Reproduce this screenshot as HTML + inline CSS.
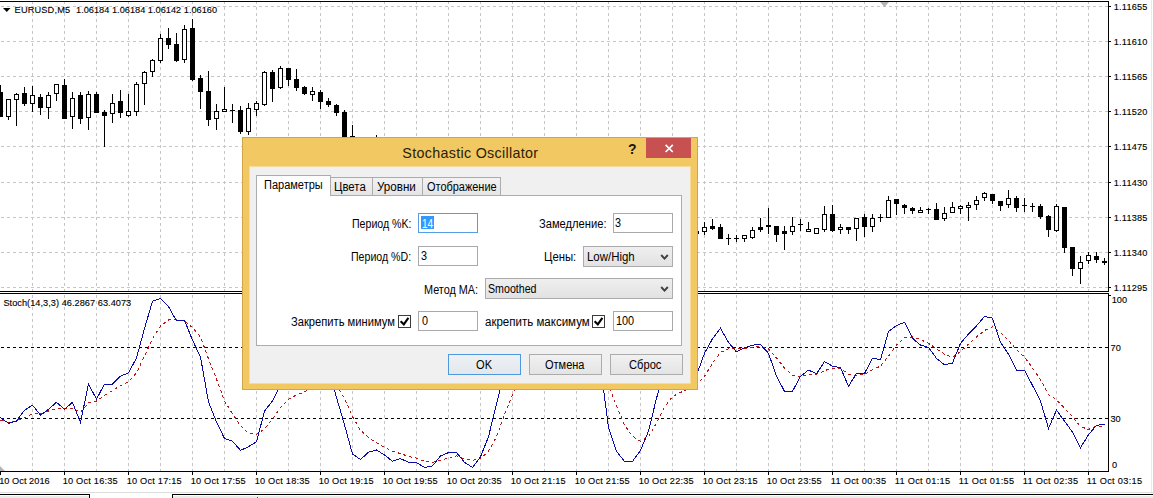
<!DOCTYPE html>
<html><head><meta charset="utf-8"><title>Stochastic Oscillator</title>
<style>
html,body{margin:0;padding:0;background:#fff;}
body{width:1153px;height:498px;position:relative;overflow:hidden;font-family:"Liberation Sans",sans-serif;color:#000;}
svg.ch{position:absolute;left:0;top:0;}
svg.ic{position:absolute;z-index:3;}
.t{position:absolute;white-space:pre;}
.b{position:absolute;box-sizing:border-box;}
#dlg{left:242px;top:137px;width:456px;height:253px;background:#f1c862;border:1px solid #d3a449;z-index:2;}
#cli{left:250px;top:167px;width:440px;height:216px;background:#f0f0f0;z-index:2;box-shadow:0 0 0 1px rgba(255,255,255,0.35);}
.tab{border:1px solid #acacac;border-bottom:none;background:linear-gradient(#f2f2f2,#e5e5e5);z-index:2;}
.in{border:1px solid #a8a9ab;background:#fff;z-index:2;}
.cb{border:1px solid #acacac;background:linear-gradient(#efefef,#e2e2e2);z-index:2;}
.btn{border:1px solid #acacac;background:linear-gradient(#f1f1f1,#e4e4e4);z-index:2;top:354px;width:73px;height:21px;}
.chk{border:1px solid #3c3c3c;background:#fff;width:13px;height:13px;z-index:2;}
</style></head><body>
<svg class="ch" width="1153" height="498" viewBox="0 0 1153 498" shape-rendering="crispEdges">
<line x1="1" y1="6.5" x2="1108" y2="6.5" stroke="#c6c6c6" stroke-dasharray="3 3"/>
<line x1="1" y1="41.5" x2="1108" y2="41.5" stroke="#c6c6c6" stroke-dasharray="3 3"/>
<line x1="1" y1="76.5" x2="1108" y2="76.5" stroke="#c6c6c6" stroke-dasharray="3 3"/>
<line x1="1" y1="111.5" x2="1108" y2="111.5" stroke="#c6c6c6" stroke-dasharray="3 3"/>
<line x1="1" y1="146.5" x2="1108" y2="146.5" stroke="#c6c6c6" stroke-dasharray="3 3"/>
<line x1="1" y1="182.5" x2="1108" y2="182.5" stroke="#c6c6c6" stroke-dasharray="3 3"/>
<line x1="1" y1="217.5" x2="1108" y2="217.5" stroke="#c6c6c6" stroke-dasharray="3 3"/>
<line x1="1" y1="252.5" x2="1108" y2="252.5" stroke="#c6c6c6" stroke-dasharray="3 3"/>
<line x1="1" y1="287.5" x2="1108" y2="287.5" stroke="#c6c6c6" stroke-dasharray="3 3"/>
<line x1="32.5" y1="1" x2="32.5" y2="291" stroke="#c6c6c6" stroke-dasharray="3 3"/>
<line x1="32.5" y1="295" x2="32.5" y2="471" stroke="#c6c6c6" stroke-dasharray="3 3"/>
<line x1="64.5" y1="1" x2="64.5" y2="291" stroke="#c6c6c6" stroke-dasharray="3 3"/>
<line x1="64.5" y1="295" x2="64.5" y2="471" stroke="#c6c6c6" stroke-dasharray="3 3"/>
<line x1="96.5" y1="1" x2="96.5" y2="291" stroke="#c6c6c6" stroke-dasharray="3 3"/>
<line x1="96.5" y1="295" x2="96.5" y2="471" stroke="#c6c6c6" stroke-dasharray="3 3"/>
<line x1="128.5" y1="1" x2="128.5" y2="291" stroke="#c6c6c6" stroke-dasharray="3 3"/>
<line x1="128.5" y1="295" x2="128.5" y2="471" stroke="#c6c6c6" stroke-dasharray="3 3"/>
<line x1="160.5" y1="1" x2="160.5" y2="291" stroke="#c6c6c6" stroke-dasharray="3 3"/>
<line x1="160.5" y1="295" x2="160.5" y2="471" stroke="#c6c6c6" stroke-dasharray="3 3"/>
<line x1="192.5" y1="1" x2="192.5" y2="291" stroke="#c6c6c6" stroke-dasharray="3 3"/>
<line x1="192.5" y1="295" x2="192.5" y2="471" stroke="#c6c6c6" stroke-dasharray="3 3"/>
<line x1="224.5" y1="1" x2="224.5" y2="291" stroke="#c6c6c6" stroke-dasharray="3 3"/>
<line x1="224.5" y1="295" x2="224.5" y2="471" stroke="#c6c6c6" stroke-dasharray="3 3"/>
<line x1="256.5" y1="1" x2="256.5" y2="291" stroke="#c6c6c6" stroke-dasharray="3 3"/>
<line x1="256.5" y1="295" x2="256.5" y2="471" stroke="#c6c6c6" stroke-dasharray="3 3"/>
<line x1="288.5" y1="1" x2="288.5" y2="291" stroke="#c6c6c6" stroke-dasharray="3 3"/>
<line x1="288.5" y1="295" x2="288.5" y2="471" stroke="#c6c6c6" stroke-dasharray="3 3"/>
<line x1="320.5" y1="1" x2="320.5" y2="291" stroke="#c6c6c6" stroke-dasharray="3 3"/>
<line x1="320.5" y1="295" x2="320.5" y2="471" stroke="#c6c6c6" stroke-dasharray="3 3"/>
<line x1="352.5" y1="1" x2="352.5" y2="291" stroke="#c6c6c6" stroke-dasharray="3 3"/>
<line x1="352.5" y1="295" x2="352.5" y2="471" stroke="#c6c6c6" stroke-dasharray="3 3"/>
<line x1="384.5" y1="1" x2="384.5" y2="291" stroke="#c6c6c6" stroke-dasharray="3 3"/>
<line x1="384.5" y1="295" x2="384.5" y2="471" stroke="#c6c6c6" stroke-dasharray="3 3"/>
<line x1="416.5" y1="1" x2="416.5" y2="291" stroke="#c6c6c6" stroke-dasharray="3 3"/>
<line x1="416.5" y1="295" x2="416.5" y2="471" stroke="#c6c6c6" stroke-dasharray="3 3"/>
<line x1="448.5" y1="1" x2="448.5" y2="291" stroke="#c6c6c6" stroke-dasharray="3 3"/>
<line x1="448.5" y1="295" x2="448.5" y2="471" stroke="#c6c6c6" stroke-dasharray="3 3"/>
<line x1="480.5" y1="1" x2="480.5" y2="291" stroke="#c6c6c6" stroke-dasharray="3 3"/>
<line x1="480.5" y1="295" x2="480.5" y2="471" stroke="#c6c6c6" stroke-dasharray="3 3"/>
<line x1="512.5" y1="1" x2="512.5" y2="291" stroke="#c6c6c6" stroke-dasharray="3 3"/>
<line x1="512.5" y1="295" x2="512.5" y2="471" stroke="#c6c6c6" stroke-dasharray="3 3"/>
<line x1="544.5" y1="1" x2="544.5" y2="291" stroke="#c6c6c6" stroke-dasharray="3 3"/>
<line x1="544.5" y1="295" x2="544.5" y2="471" stroke="#c6c6c6" stroke-dasharray="3 3"/>
<line x1="576.5" y1="1" x2="576.5" y2="291" stroke="#c6c6c6" stroke-dasharray="3 3"/>
<line x1="576.5" y1="295" x2="576.5" y2="471" stroke="#c6c6c6" stroke-dasharray="3 3"/>
<line x1="608.5" y1="1" x2="608.5" y2="291" stroke="#c6c6c6" stroke-dasharray="3 3"/>
<line x1="608.5" y1="295" x2="608.5" y2="471" stroke="#c6c6c6" stroke-dasharray="3 3"/>
<line x1="640.5" y1="1" x2="640.5" y2="291" stroke="#c6c6c6" stroke-dasharray="3 3"/>
<line x1="640.5" y1="295" x2="640.5" y2="471" stroke="#c6c6c6" stroke-dasharray="3 3"/>
<line x1="672.5" y1="1" x2="672.5" y2="291" stroke="#c6c6c6" stroke-dasharray="3 3"/>
<line x1="672.5" y1="295" x2="672.5" y2="471" stroke="#c6c6c6" stroke-dasharray="3 3"/>
<line x1="704.5" y1="1" x2="704.5" y2="291" stroke="#c6c6c6" stroke-dasharray="3 3"/>
<line x1="704.5" y1="295" x2="704.5" y2="471" stroke="#c6c6c6" stroke-dasharray="3 3"/>
<line x1="736.5" y1="1" x2="736.5" y2="291" stroke="#c6c6c6" stroke-dasharray="3 3"/>
<line x1="736.5" y1="295" x2="736.5" y2="471" stroke="#c6c6c6" stroke-dasharray="3 3"/>
<line x1="768.5" y1="1" x2="768.5" y2="291" stroke="#c6c6c6" stroke-dasharray="3 3"/>
<line x1="768.5" y1="295" x2="768.5" y2="471" stroke="#c6c6c6" stroke-dasharray="3 3"/>
<line x1="800.5" y1="1" x2="800.5" y2="291" stroke="#c6c6c6" stroke-dasharray="3 3"/>
<line x1="800.5" y1="295" x2="800.5" y2="471" stroke="#c6c6c6" stroke-dasharray="3 3"/>
<line x1="832.5" y1="1" x2="832.5" y2="291" stroke="#c6c6c6" stroke-dasharray="3 3"/>
<line x1="832.5" y1="295" x2="832.5" y2="471" stroke="#c6c6c6" stroke-dasharray="3 3"/>
<line x1="864.5" y1="1" x2="864.5" y2="291" stroke="#c6c6c6" stroke-dasharray="3 3"/>
<line x1="864.5" y1="295" x2="864.5" y2="471" stroke="#c6c6c6" stroke-dasharray="3 3"/>
<line x1="896.5" y1="1" x2="896.5" y2="291" stroke="#c6c6c6" stroke-dasharray="3 3"/>
<line x1="896.5" y1="295" x2="896.5" y2="471" stroke="#c6c6c6" stroke-dasharray="3 3"/>
<line x1="928.5" y1="1" x2="928.5" y2="291" stroke="#c6c6c6" stroke-dasharray="3 3"/>
<line x1="928.5" y1="295" x2="928.5" y2="471" stroke="#c6c6c6" stroke-dasharray="3 3"/>
<line x1="960.5" y1="1" x2="960.5" y2="291" stroke="#c6c6c6" stroke-dasharray="3 3"/>
<line x1="960.5" y1="295" x2="960.5" y2="471" stroke="#c6c6c6" stroke-dasharray="3 3"/>
<line x1="992.5" y1="1" x2="992.5" y2="291" stroke="#c6c6c6" stroke-dasharray="3 3"/>
<line x1="992.5" y1="295" x2="992.5" y2="471" stroke="#c6c6c6" stroke-dasharray="3 3"/>
<line x1="1024.5" y1="1" x2="1024.5" y2="291" stroke="#c6c6c6" stroke-dasharray="3 3"/>
<line x1="1024.5" y1="295" x2="1024.5" y2="471" stroke="#c6c6c6" stroke-dasharray="3 3"/>
<line x1="1056.5" y1="1" x2="1056.5" y2="291" stroke="#c6c6c6" stroke-dasharray="3 3"/>
<line x1="1056.5" y1="295" x2="1056.5" y2="471" stroke="#c6c6c6" stroke-dasharray="3 3"/>
<line x1="1088.5" y1="1" x2="1088.5" y2="291" stroke="#c6c6c6" stroke-dasharray="3 3"/>
<line x1="1088.5" y1="295" x2="1088.5" y2="471" stroke="#c6c6c6" stroke-dasharray="3 3"/>
<rect x="0" y="85" width="1" height="32" fill="#000"/>
<rect x="-2" y="92" width="5" height="25" fill="#000"/>
<rect x="8" y="99" width="1" height="21" fill="#000"/>
<rect x="6" y="99" width="5" height="18" fill="#000"/>
<rect x="7" y="100" width="3" height="16" fill="#fff"/>
<rect x="16" y="93" width="1" height="33" fill="#000"/>
<rect x="14" y="94" width="5" height="6" fill="#000"/>
<rect x="15" y="95" width="3" height="4" fill="#fff"/>
<rect x="24" y="87" width="1" height="19" fill="#000"/>
<rect x="22" y="93" width="5" height="11" fill="#000"/>
<rect x="32" y="86" width="1" height="26" fill="#000"/>
<rect x="30" y="95" width="5" height="9" fill="#000"/>
<rect x="31" y="96" width="3" height="7" fill="#fff"/>
<rect x="40" y="94" width="1" height="21" fill="#000"/>
<rect x="38" y="97" width="5" height="11" fill="#000"/>
<rect x="48" y="92" width="1" height="27" fill="#000"/>
<rect x="46" y="95" width="5" height="13" fill="#000"/>
<rect x="47" y="96" width="3" height="11" fill="#fff"/>
<rect x="56" y="84" width="1" height="17" fill="#000"/>
<rect x="54" y="84" width="5" height="10" fill="#000"/>
<rect x="55" y="85" width="3" height="8" fill="#fff"/>
<rect x="64" y="79" width="1" height="40" fill="#000"/>
<rect x="62" y="85" width="5" height="34" fill="#000"/>
<rect x="72" y="92" width="1" height="37" fill="#000"/>
<rect x="70" y="98" width="5" height="19" fill="#000"/>
<rect x="71" y="99" width="3" height="17" fill="#fff"/>
<rect x="80" y="92" width="1" height="32" fill="#000"/>
<rect x="78" y="95" width="5" height="24" fill="#000"/>
<rect x="88" y="91" width="1" height="39" fill="#000"/>
<rect x="86" y="94" width="5" height="24" fill="#000"/>
<rect x="87" y="95" width="3" height="22" fill="#fff"/>
<rect x="96" y="92" width="1" height="21" fill="#000"/>
<rect x="94" y="94" width="5" height="19" fill="#000"/>
<rect x="104" y="110" width="1" height="37" fill="#000"/>
<rect x="102" y="112" width="5" height="4" fill="#000"/>
<rect x="112" y="94" width="1" height="29" fill="#000"/>
<rect x="110" y="103" width="5" height="11" fill="#000"/>
<rect x="111" y="104" width="3" height="9" fill="#fff"/>
<rect x="120" y="90" width="1" height="28" fill="#000"/>
<rect x="118" y="101" width="5" height="12" fill="#000"/>
<rect x="128" y="94" width="1" height="23" fill="#000"/>
<rect x="126" y="111" width="5" height="5" fill="#000"/>
<rect x="127" y="112" width="3" height="3" fill="#fff"/>
<rect x="136" y="82" width="1" height="34" fill="#000"/>
<rect x="134" y="84" width="5" height="28" fill="#000"/>
<rect x="135" y="85" width="3" height="26" fill="#fff"/>
<rect x="144" y="71" width="1" height="34" fill="#000"/>
<rect x="142" y="72" width="5" height="12" fill="#000"/>
<rect x="143" y="73" width="3" height="10" fill="#fff"/>
<rect x="152" y="59" width="1" height="18" fill="#000"/>
<rect x="150" y="60" width="5" height="12" fill="#000"/>
<rect x="151" y="61" width="3" height="10" fill="#fff"/>
<rect x="160" y="34" width="1" height="29" fill="#000"/>
<rect x="158" y="38" width="5" height="23" fill="#000"/>
<rect x="159" y="39" width="3" height="21" fill="#fff"/>
<rect x="168" y="28" width="1" height="21" fill="#000"/>
<rect x="166" y="38" width="5" height="7" fill="#000"/>
<rect x="176" y="33" width="1" height="29" fill="#000"/>
<rect x="174" y="44" width="5" height="17" fill="#000"/>
<rect x="184" y="25" width="1" height="38" fill="#000"/>
<rect x="182" y="29" width="5" height="31" fill="#000"/>
<rect x="183" y="30" width="3" height="29" fill="#fff"/>
<rect x="192" y="19" width="1" height="62" fill="#000"/>
<rect x="190" y="28" width="5" height="52" fill="#000"/>
<rect x="200" y="75" width="1" height="34" fill="#000"/>
<rect x="198" y="78" width="5" height="14" fill="#000"/>
<rect x="208" y="71" width="1" height="55" fill="#000"/>
<rect x="206" y="91" width="5" height="29" fill="#000"/>
<rect x="216" y="104" width="1" height="26" fill="#000"/>
<rect x="214" y="111" width="5" height="8" fill="#000"/>
<rect x="215" y="112" width="3" height="6" fill="#fff"/>
<rect x="224" y="87" width="1" height="25" fill="#000"/>
<rect x="222" y="109" width="5" height="3" fill="#000"/>
<rect x="223" y="110" width="3" height="1" fill="#fff"/>
<rect x="232" y="104" width="1" height="19" fill="#000"/>
<rect x="230" y="110" width="5" height="1" fill="#000"/>
<rect x="240" y="106" width="1" height="28" fill="#000"/>
<rect x="238" y="110" width="5" height="22" fill="#000"/>
<rect x="248" y="103" width="1" height="32" fill="#000"/>
<rect x="246" y="108" width="5" height="24" fill="#000"/>
<rect x="247" y="109" width="3" height="22" fill="#fff"/>
<rect x="256" y="101" width="1" height="15" fill="#000"/>
<rect x="254" y="103" width="5" height="7" fill="#000"/>
<rect x="255" y="104" width="3" height="5" fill="#fff"/>
<rect x="264" y="71" width="1" height="35" fill="#000"/>
<rect x="262" y="72" width="5" height="33" fill="#000"/>
<rect x="263" y="73" width="3" height="31" fill="#fff"/>
<rect x="272" y="70" width="1" height="32" fill="#000"/>
<rect x="270" y="72" width="5" height="17" fill="#000"/>
<rect x="280" y="66" width="1" height="23" fill="#000"/>
<rect x="278" y="68" width="5" height="20" fill="#000"/>
<rect x="279" y="69" width="3" height="18" fill="#fff"/>
<rect x="288" y="68" width="1" height="18" fill="#000"/>
<rect x="286" y="68" width="5" height="12" fill="#000"/>
<rect x="296" y="69" width="1" height="22" fill="#000"/>
<rect x="294" y="79" width="5" height="9" fill="#000"/>
<rect x="304" y="86" width="1" height="9" fill="#000"/>
<rect x="302" y="87" width="5" height="7" fill="#000"/>
<rect x="312" y="87" width="1" height="14" fill="#000"/>
<rect x="310" y="91" width="5" height="4" fill="#000"/>
<rect x="311" y="92" width="3" height="2" fill="#fff"/>
<rect x="320" y="90" width="1" height="19" fill="#000"/>
<rect x="318" y="92" width="5" height="10" fill="#000"/>
<rect x="328" y="98" width="1" height="9" fill="#000"/>
<rect x="326" y="101" width="5" height="4" fill="#000"/>
<rect x="336" y="104" width="1" height="12" fill="#000"/>
<rect x="334" y="105" width="5" height="8" fill="#000"/>
<rect x="344" y="110" width="1" height="30" fill="#000"/>
<rect x="342" y="112" width="5" height="28" fill="#000"/>
<rect x="352" y="125" width="1" height="15" fill="#000"/>
<rect x="350" y="136" width="5" height="4" fill="#000"/>
<rect x="351" y="137" width="3" height="2" fill="#fff"/>
<rect x="376" y="135" width="1" height="2" fill="#000"/>
<rect x="374" y="137" width="5" height="1" fill="#000"/>
<rect x="696" y="231" width="1" height="3" fill="#000"/>
<rect x="694" y="231" width="5" height="3" fill="#000"/>
<rect x="704" y="222" width="1" height="13" fill="#000"/>
<rect x="702" y="227" width="5" height="5" fill="#000"/>
<rect x="703" y="228" width="3" height="3" fill="#fff"/>
<rect x="712" y="219" width="1" height="11" fill="#000"/>
<rect x="710" y="226" width="5" height="3" fill="#000"/>
<rect x="720" y="224" width="1" height="15" fill="#000"/>
<rect x="718" y="227" width="5" height="12" fill="#000"/>
<rect x="728" y="234" width="1" height="11" fill="#000"/>
<rect x="726" y="238" width="5" height="1" fill="#000"/>
<rect x="736" y="235" width="1" height="7" fill="#000"/>
<rect x="734" y="238" width="5" height="1" fill="#000"/>
<rect x="744" y="235" width="1" height="7" fill="#000"/>
<rect x="742" y="235" width="5" height="4" fill="#000"/>
<rect x="743" y="236" width="3" height="2" fill="#fff"/>
<rect x="752" y="227" width="1" height="12" fill="#000"/>
<rect x="750" y="230" width="5" height="8" fill="#000"/>
<rect x="751" y="231" width="3" height="6" fill="#fff"/>
<rect x="760" y="218" width="1" height="14" fill="#000"/>
<rect x="758" y="227" width="5" height="3" fill="#000"/>
<rect x="768" y="208" width="1" height="26" fill="#000"/>
<rect x="766" y="225" width="5" height="2" fill="#000"/>
<rect x="776" y="226" width="1" height="16" fill="#000"/>
<rect x="774" y="226" width="5" height="9" fill="#000"/>
<rect x="784" y="226" width="1" height="24" fill="#000"/>
<rect x="782" y="231" width="5" height="3" fill="#000"/>
<rect x="792" y="217" width="1" height="18" fill="#000"/>
<rect x="790" y="226" width="5" height="6" fill="#000"/>
<rect x="791" y="227" width="3" height="4" fill="#fff"/>
<rect x="800" y="219" width="1" height="12" fill="#000"/>
<rect x="798" y="224" width="5" height="1" fill="#000"/>
<rect x="808" y="222" width="1" height="8" fill="#000"/>
<rect x="806" y="229" width="5" height="3" fill="#000"/>
<rect x="807" y="230" width="3" height="1" fill="#fff"/>
<rect x="816" y="228" width="1" height="6" fill="#000"/>
<rect x="814" y="228" width="5" height="6" fill="#000"/>
<rect x="815" y="229" width="3" height="4" fill="#fff"/>
<rect x="824" y="206" width="1" height="26" fill="#000"/>
<rect x="822" y="214" width="5" height="16" fill="#000"/>
<rect x="823" y="215" width="3" height="14" fill="#fff"/>
<rect x="832" y="205" width="1" height="27" fill="#000"/>
<rect x="830" y="214" width="5" height="17" fill="#000"/>
<rect x="840" y="224" width="1" height="10" fill="#000"/>
<rect x="838" y="227" width="5" height="3" fill="#000"/>
<rect x="839" y="228" width="3" height="1" fill="#fff"/>
<rect x="848" y="227" width="1" height="7" fill="#000"/>
<rect x="846" y="227" width="5" height="3" fill="#000"/>
<rect x="856" y="218" width="1" height="23" fill="#000"/>
<rect x="854" y="218" width="5" height="11" fill="#000"/>
<rect x="855" y="219" width="3" height="9" fill="#fff"/>
<rect x="864" y="214" width="1" height="23" fill="#000"/>
<rect x="862" y="217" width="5" height="10" fill="#000"/>
<rect x="872" y="214" width="1" height="18" fill="#000"/>
<rect x="870" y="218" width="5" height="9" fill="#000"/>
<rect x="871" y="219" width="3" height="7" fill="#fff"/>
<rect x="880" y="214" width="1" height="8" fill="#000"/>
<rect x="878" y="217" width="5" height="1" fill="#000"/>
<rect x="888" y="196" width="1" height="22" fill="#000"/>
<rect x="886" y="200" width="5" height="18" fill="#000"/>
<rect x="887" y="201" width="3" height="16" fill="#fff"/>
<rect x="896" y="199" width="1" height="16" fill="#000"/>
<rect x="894" y="199" width="5" height="5" fill="#000"/>
<rect x="904" y="204" width="1" height="10" fill="#000"/>
<rect x="902" y="205" width="5" height="3" fill="#000"/>
<rect x="912" y="207" width="1" height="7" fill="#000"/>
<rect x="910" y="208" width="5" height="3" fill="#000"/>
<rect x="920" y="207" width="1" height="4" fill="#000"/>
<rect x="918" y="210" width="5" height="3" fill="#000"/>
<rect x="919" y="211" width="3" height="1" fill="#fff"/>
<rect x="928" y="208" width="1" height="6" fill="#000"/>
<rect x="926" y="209" width="5" height="1" fill="#000"/>
<rect x="936" y="203" width="1" height="17" fill="#000"/>
<rect x="934" y="209" width="5" height="11" fill="#000"/>
<rect x="944" y="207" width="1" height="14" fill="#000"/>
<rect x="942" y="213" width="5" height="6" fill="#000"/>
<rect x="943" y="214" width="3" height="4" fill="#fff"/>
<rect x="952" y="202" width="1" height="11" fill="#000"/>
<rect x="950" y="207" width="5" height="6" fill="#000"/>
<rect x="951" y="208" width="3" height="4" fill="#fff"/>
<rect x="960" y="205" width="1" height="9" fill="#000"/>
<rect x="958" y="206" width="5" height="3" fill="#000"/>
<rect x="959" y="207" width="3" height="1" fill="#fff"/>
<rect x="968" y="202" width="1" height="19" fill="#000"/>
<rect x="966" y="205" width="5" height="3" fill="#000"/>
<rect x="967" y="206" width="3" height="1" fill="#fff"/>
<rect x="976" y="196" width="1" height="14" fill="#000"/>
<rect x="974" y="200" width="5" height="5" fill="#000"/>
<rect x="975" y="201" width="3" height="3" fill="#fff"/>
<rect x="984" y="192" width="1" height="9" fill="#000"/>
<rect x="982" y="193" width="5" height="5" fill="#000"/>
<rect x="983" y="194" width="3" height="3" fill="#fff"/>
<rect x="992" y="194" width="1" height="10" fill="#000"/>
<rect x="990" y="194" width="5" height="7" fill="#000"/>
<rect x="1000" y="201" width="1" height="10" fill="#000"/>
<rect x="998" y="201" width="5" height="5" fill="#000"/>
<rect x="1008" y="190" width="1" height="18" fill="#000"/>
<rect x="1006" y="198" width="5" height="7" fill="#000"/>
<rect x="1007" y="199" width="3" height="5" fill="#fff"/>
<rect x="1016" y="196" width="1" height="16" fill="#000"/>
<rect x="1014" y="198" width="5" height="10" fill="#000"/>
<rect x="1024" y="198" width="1" height="14" fill="#000"/>
<rect x="1022" y="205" width="5" height="1" fill="#000"/>
<rect x="1032" y="203" width="1" height="9" fill="#000"/>
<rect x="1030" y="206" width="5" height="1" fill="#000"/>
<rect x="1040" y="204" width="1" height="15" fill="#000"/>
<rect x="1038" y="206" width="5" height="11" fill="#000"/>
<rect x="1048" y="215" width="1" height="22" fill="#000"/>
<rect x="1046" y="216" width="5" height="14" fill="#000"/>
<rect x="1056" y="204" width="1" height="28" fill="#000"/>
<rect x="1054" y="206" width="5" height="25" fill="#000"/>
<rect x="1055" y="207" width="3" height="23" fill="#fff"/>
<rect x="1064" y="207" width="1" height="46" fill="#000"/>
<rect x="1062" y="207" width="5" height="41" fill="#000"/>
<rect x="1072" y="247" width="1" height="29" fill="#000"/>
<rect x="1070" y="247" width="5" height="22" fill="#000"/>
<rect x="1080" y="256" width="1" height="28" fill="#000"/>
<rect x="1078" y="262" width="5" height="7" fill="#000"/>
<rect x="1079" y="263" width="3" height="5" fill="#fff"/>
<rect x="1088" y="252" width="1" height="12" fill="#000"/>
<rect x="1086" y="255" width="5" height="6" fill="#000"/>
<rect x="1087" y="256" width="3" height="4" fill="#fff"/>
<rect x="1096" y="252" width="1" height="11" fill="#000"/>
<rect x="1094" y="256" width="5" height="4" fill="#000"/>
<rect x="1104" y="258" width="1" height="7" fill="#000"/>
<rect x="1102" y="261" width="5" height="2" fill="#000"/>
<line x1="1" y1="347.5" x2="1108" y2="347.5" stroke="#000" stroke-dasharray="3 3"/>
<line x1="1" y1="418.5" x2="1108" y2="418.5" stroke="#000" stroke-dasharray="3 3"/>
<polyline points="0.5,420.2 8.5,422.4 16.5,420.6 24.5,417.8 32.5,413.8 40.5,413.8 48.5,411.0 56.5,408.9 64.5,408.3 72.5,408.3 80.5,412.5 88.5,402.9 96.5,401.0 104.5,395.5 112.5,390.6 120.5,385.5 128.5,382.0 136.5,372.9 144.5,356.0 152.5,338.7 160.5,325.9 168.5,320.0 176.5,319.5 184.5,320.8 192.5,327.7 200.5,336.9 208.5,358.8 216.5,379.0 224.5,401.0 232.5,413.8 240.5,425.7 248.5,433.4 256.5,434.5 264.5,429.0 272.5,419.3 280.5,407.4 288.5,399.2 296.5,395.0 304.5,391.9 312.5,388.0 320.5,380.0 328.5,375.0 336.5,385.0 344.5,398.3 352.5,416.6 360.5,430.3 368.5,437.6 376.5,442.7 384.5,447.3 392.5,451.2 400.5,453.6 408.5,456.4 416.5,458.2 424.5,461.4 432.5,462.3 440.5,460.4 448.5,457.7 456.5,455.9 464.5,459.0 472.5,460.4 480.5,458.6 488.5,451.3 496.5,436.7 504.5,414.7 512.5,394.6 520.5,375.0" fill="none" stroke="#b81414" stroke-dasharray="3 3"/>
<polyline points="600.5,360.0 608.5,385.0 616.5,405.6 624.5,424.8 632.5,436.3 640.5,441.2 648.5,436.7 656.5,423.0 664.5,407.4 672.5,396.5 680.5,392.4 688.5,389.0 696.5,384.6 704.5,376.2 712.5,363.4 720.5,352.4 728.5,348.8 736.5,348.8 744.5,348.4 752.5,347.5 760.5,346.4 768.5,348.8 776.5,357.9 784.5,368.0 792.5,375.3 800.5,376.7 808.5,374.4 816.5,374.4 824.5,370.7 832.5,368.0 840.5,368.0 848.5,374.4 856.5,375.3 864.5,374.4 872.5,369.8 880.5,366.1 888.5,356.1 896.5,345.1 904.5,337.8 912.5,336.9 920.5,339.6 928.5,343.3 936.5,348.8 944.5,354.2 952.5,357.4 960.5,351.5 968.5,344.2 976.5,336.9 984.5,330.5 992.5,326.8 1000.5,332.3 1008.5,340.5 1016.5,349.7 1024.5,357.0 1032.5,368.0 1040.5,379.5 1048.5,394.6 1056.5,399.7 1064.5,408.3 1072.5,416.6 1080.5,426.6 1088.5,429.4 1096.5,426.1 1104.5,426.6" fill="none" stroke="#b81414" stroke-dasharray="3 3"/>
<polyline points="0.5,417.5 8.5,423.3 16.5,421.1 24.5,410.2 32.5,405.2 40.5,415.1 48.5,409.3 56.5,402.3 64.5,409.3 72.5,402.3 80.5,422.4 88.5,384.0 96.5,399.2 104.5,384.0 112.5,384.0 120.5,376.2 128.5,372.9 136.5,357.9 144.5,328.6 152.5,301.2 160.5,298.5 168.5,306.7 176.5,320.8 184.5,320.4 192.5,340.2 200.5,357.0 208.5,402.0 216.5,422.0 224.5,438.5 232.5,441.2 240.5,450.4 248.5,446.7 256.5,441.8 264.5,411.1 272.5,401.0 280.5,385.5 288.5,370.0 296.5,350.0 304.5,340.0 312.5,345.0 320.5,350.0 328.5,370.0 336.5,397.4 344.5,424.8 352.5,454.0 360.5,459.5 368.5,452.2 376.5,450.0 384.5,455.0 392.5,461.2 400.5,458.6 408.5,462.3 416.5,462.6 424.5,467.4 432.5,465.9 440.5,455.9 448.5,452.6 456.5,452.6 464.5,462.3 472.5,467.4 480.5,456.8 488.5,436.7 496.5,403.8 504.5,372.0" fill="none" stroke="#0a0aa8"/>
<polyline points="600.5,365.7 608.5,427.5 616.5,451.3 624.5,461.4 632.5,461.4 640.5,450.4 648.5,431.2 656.5,398.3 664.5,370.0 672.5,360.0 680.5,365.0 688.5,380.0 696.5,375.3 704.5,353.3 712.5,338.7 720.5,328.3 728.5,342.4 736.5,351.9 744.5,347.8 752.5,345.1 760.5,344.6 768.5,353.3 776.5,376.2 784.5,391.3 792.5,391.3 800.5,376.2 808.5,370.1 816.5,373.8 824.5,361.6 832.5,366.1 840.5,367.6 848.5,386.2 856.5,373.4 864.5,373.4 872.5,358.4 880.5,359.5 888.5,331.4 896.5,325.5 904.5,322.3 912.5,338.3 920.5,345.1 928.5,347.3 936.5,358.4 944.5,364.8 952.5,363.0 960.5,343.3 968.5,334.1 976.5,325.9 984.5,316.4 992.5,318.2 1000.5,342.4 1008.5,354.2 1016.5,370.1 1024.5,370.1 1032.5,385.4 1040.5,401.0 1048.5,428.4 1056.5,410.2 1064.5,421.1 1072.5,432.1 1080.5,447.6 1088.5,434.8 1096.5,425.3 1104.5,424.2" fill="none" stroke="#0a0aa8"/>
<rect x="0" y="1" width="1109" height="1" fill="#000"/>
<rect x="0" y="291" width="1109" height="1" fill="#000"/>
<rect x="0" y="293" width="1109" height="1" fill="#000"/>
<rect x="0" y="471" width="1109" height="1" fill="#000"/>
<rect x="1108" y="1" width="1" height="291" fill="#000"/>
<rect x="1108" y="293" width="1" height="179" fill="#000"/>
<rect x="1109" y="6" width="2" height="1" fill="#000"/>
<rect x="1109" y="41" width="2" height="1" fill="#000"/>
<rect x="1109" y="76" width="2" height="1" fill="#000"/>
<rect x="1109" y="111" width="2" height="1" fill="#000"/>
<rect x="1109" y="146" width="2" height="1" fill="#000"/>
<rect x="1109" y="182" width="2" height="1" fill="#000"/>
<rect x="1109" y="217" width="2" height="1" fill="#000"/>
<rect x="1109" y="252" width="2" height="1" fill="#000"/>
<rect x="1109" y="287" width="2" height="1" fill="#000"/>
<rect x="1109" y="295" width="2" height="1" fill="#000"/>
<rect x="0" y="472" width="1" height="3" fill="#000"/>
<rect x="64" y="472" width="1" height="3" fill="#000"/>
<rect x="128" y="472" width="1" height="3" fill="#000"/>
<rect x="192" y="472" width="1" height="3" fill="#000"/>
<rect x="256" y="472" width="1" height="3" fill="#000"/>
<rect x="320" y="472" width="1" height="3" fill="#000"/>
<rect x="384" y="472" width="1" height="3" fill="#000"/>
<rect x="448" y="472" width="1" height="3" fill="#000"/>
<rect x="512" y="472" width="1" height="3" fill="#000"/>
<rect x="576" y="472" width="1" height="3" fill="#000"/>
<rect x="640" y="472" width="1" height="3" fill="#000"/>
<rect x="704" y="472" width="1" height="3" fill="#000"/>
<rect x="768" y="472" width="1" height="3" fill="#000"/>
<rect x="832" y="472" width="1" height="3" fill="#000"/>
<rect x="896" y="472" width="1" height="3" fill="#000"/>
<rect x="960" y="472" width="1" height="3" fill="#000"/>
<rect x="1024" y="472" width="1" height="3" fill="#000"/>
<rect x="1088" y="472" width="1" height="3" fill="#000"/>
<polygon points="880,2 889,2 884.5,7" fill="#b4b4b4" shape-rendering="auto"/>
<polygon points="0,466 0,471 5,471" fill="#b4b4b4" shape-rendering="auto"/>
<polygon points="3,8 10.5,8 6.75,12" fill="#000" shape-rendering="auto"/>
</svg>
<div class="b" style="left:1151px;top:0;width:1px;height:492px;background:#e6eaf0;"></div>
<div class="b" style="left:0;top:492px;width:1153px;height:1px;background:#dcdcdc;"></div>
<div class="b" style="left:0;top:494px;width:90px;height:4px;border-top:1px solid #000;border-right:1px solid #000;background:#ececec;box-shadow:inset 0 1px 0 #fff;"></div>
<div class="b" style="left:172px;top:494px;width:981px;height:4px;border-top:1px solid #000;border-left:1px solid #000;background:#ececec;box-shadow:inset 0 1px 0 #fff;"></div>

<div class="b" style="left:257px;top:497px;width:1px;height:1px;background:#555;"></div>
<div class="b" id="dlg"></div>
<div class="b" style="left:646px;top:138px;width:45px;height:20px;background:#c75050;z-index:2;"></div>
<svg class="ic" style="left:646px;top:138px" width="45" height="20" viewBox="0 0 45 20"><path d="M19.6 6.8 L26.8 14 M26.8 6.8 L19.6 14" stroke="#fff" stroke-width="1.7" fill="none"/></svg>
<div class="b" id="cli"></div>
<div class="b" style="left:256px;top:195px;width:426px;height:151px;border:1px solid #acacac;background:#fff;z-index:2;"></div>
<div class="b tab" style="left:330px;top:177px;width:43px;height:18px;"></div>
<div class="b tab" style="left:372px;top:177px;width:51px;height:18px;"></div>
<div class="b tab" style="left:422px;top:177px;width:79px;height:18px;"></div>
<div class="b tab" style="left:256px;top:175px;width:75px;height:21px;background:#fff;"></div>

<div class="b in" style="left:418px;top:213px;width:60px;height:20px;border-color:#569de5;"></div>
<div class="b" style="left:421px;top:216px;width:13px;height:13px;background:#3399ff;z-index:2;"></div>
<div class="b in" style="left:418px;top:246px;width:60px;height:20px;"></div>
<div class="b in" style="left:613px;top:213px;width:60px;height:20px;"></div>
<div class="b cb" style="left:583px;top:246px;width:90px;height:21px;"></div>
<svg class="ic" style="left:659.5px;top:253.5px" width="9" height="7" viewBox="0 0 9 7"><path d="M1.2 1 L4.5 4.6 L7.8 1" stroke="#404040" stroke-width="1.9" fill="none"/></svg>
<div class="b cb" style="left:485px;top:278px;width:188px;height:21px;"></div>
<svg class="ic" style="left:660px;top:285.5px" width="9" height="7" viewBox="0 0 9 7"><path d="M1.2 1 L4.5 4.6 L7.8 1" stroke="#404040" stroke-width="1.9" fill="none"/></svg>
<div class="b chk" style="left:398px;top:315px;"></div>
<svg class="ic" style="left:398px;top:315px" width="13" height="13" viewBox="0 0 13 13"><path d="M2.6 6.3 L5.8 9.3 L10.4 2.9" stroke="#000" stroke-width="2.1" fill="none"/></svg>
<div class="b in" style="left:418px;top:311px;width:60px;height:20px;"></div>
<div class="b chk" style="left:592px;top:315px;"></div>
<svg class="ic" style="left:592px;top:315px" width="13" height="13" viewBox="0 0 13 13"><path d="M2.6 6.3 L5.8 9.3 L10.4 2.9" stroke="#000" stroke-width="2.1" fill="none"/></svg>
<div class="b in" style="left:613px;top:311px;width:60px;height:20px;"></div>
<div class="b btn" style="left:448px;border-color:#4f97df;background:linear-gradient(#eef2f6,#e2e7ed);"></div>
<div class="b btn" style="left:529px;"></div>
<div class="b btn" style="left:610px;"></div>
<div class="t" style="left:14.6px;top:3.6px;font-size:9.2px;line-height:12.2px;letter-spacing:0.17px;-webkit-text-stroke:0.12px #000;">EURUSD,M5</div>
<div class="t" style="left:76px;top:3.6px;font-size:9.2px;line-height:12.2px;letter-spacing:0.02px;-webkit-text-stroke:0.12px #000;">1.06184 1.06184 1.06142 1.06160</div>
<div class="t" style="left:3.4px;top:296.8px;font-size:9.2px;line-height:12.2px;letter-spacing:0.04px;-webkit-text-stroke:0.12px #000;">Stoch(14,3,3) 46.2867 63.4073</div>
<div class="t" style="left:1113.8px;top:0.8px;font-size:9.2px;line-height:12.2px;letter-spacing:0.17px;-webkit-text-stroke:0.12px #000;">1.11655</div>
<div class="t" style="left:1113.8px;top:35.8px;font-size:9.2px;line-height:12.2px;letter-spacing:0.17px;-webkit-text-stroke:0.12px #000;">1.11610</div>
<div class="t" style="left:1113.8px;top:70.8px;font-size:9.2px;line-height:12.2px;letter-spacing:0.17px;-webkit-text-stroke:0.12px #000;">1.11565</div>
<div class="t" style="left:1113.8px;top:105.8px;font-size:9.2px;line-height:12.2px;letter-spacing:0.17px;-webkit-text-stroke:0.12px #000;">1.11520</div>
<div class="t" style="left:1113.8px;top:140.8px;font-size:9.2px;line-height:12.2px;letter-spacing:0.17px;-webkit-text-stroke:0.12px #000;">1.11475</div>
<div class="t" style="left:1113.8px;top:176.8px;font-size:9.2px;line-height:12.2px;letter-spacing:0.17px;-webkit-text-stroke:0.12px #000;">1.11430</div>
<div class="t" style="left:1113.8px;top:211.8px;font-size:9.2px;line-height:12.2px;letter-spacing:0.17px;-webkit-text-stroke:0.12px #000;">1.11385</div>
<div class="t" style="left:1113.8px;top:246.8px;font-size:9.2px;line-height:12.2px;letter-spacing:0.17px;-webkit-text-stroke:0.12px #000;">1.11340</div>
<div class="t" style="left:1113.8px;top:281.8px;font-size:9.2px;line-height:12.2px;letter-spacing:0.17px;-webkit-text-stroke:0.12px #000;">1.11295</div>
<div class="t" style="left:1111.7px;top:294.4px;font-size:9.2px;line-height:12.2px;letter-spacing:0.05px;-webkit-text-stroke:0.12px #000;">100</div>
<div class="t" style="left:1110.5px;top:341.9px;font-size:9.2px;line-height:12.2px;letter-spacing:0.1px;-webkit-text-stroke:0.12px #000;">70</div>
<div class="t" style="left:1110.6px;top:412.8px;font-size:9.2px;line-height:12.2px;letter-spacing:-0.1px;-webkit-text-stroke:0.12px #000;">30</div>
<div class="t" style="left:1112px;top:459px;font-size:9.2px;line-height:12.2px;letter-spacing:0px;-webkit-text-stroke:0.12px #000;">0</div>
<div class="t" style="left:-0.8px;top:475.2px;font-size:9.2px;line-height:12.2px;letter-spacing:0.04px;-webkit-text-stroke:0.12px #000;">10 Oct 2016</div>
<div class="t" style="left:62.7px;top:475.2px;font-size:9.2px;line-height:12.2px;letter-spacing:0.22px;-webkit-text-stroke:0.12px #000;">10 Oct 16:35</div>
<div class="t" style="left:126.7px;top:475.2px;font-size:9.2px;line-height:12.2px;letter-spacing:0.22px;-webkit-text-stroke:0.12px #000;">10 Oct 17:15</div>
<div class="t" style="left:190.7px;top:475.2px;font-size:9.2px;line-height:12.2px;letter-spacing:0.22px;-webkit-text-stroke:0.12px #000;">10 Oct 17:55</div>
<div class="t" style="left:254.7px;top:475.2px;font-size:9.2px;line-height:12.2px;letter-spacing:0.22px;-webkit-text-stroke:0.12px #000;">10 Oct 18:35</div>
<div class="t" style="left:318.7px;top:475.2px;font-size:9.2px;line-height:12.2px;letter-spacing:0.22px;-webkit-text-stroke:0.12px #000;">10 Oct 19:15</div>
<div class="t" style="left:382.7px;top:475.2px;font-size:9.2px;line-height:12.2px;letter-spacing:0.22px;-webkit-text-stroke:0.12px #000;">10 Oct 19:55</div>
<div class="t" style="left:446.7px;top:475.2px;font-size:9.2px;line-height:12.2px;letter-spacing:0.22px;-webkit-text-stroke:0.12px #000;">10 Oct 20:35</div>
<div class="t" style="left:510.7px;top:475.2px;font-size:9.2px;line-height:12.2px;letter-spacing:0.22px;-webkit-text-stroke:0.12px #000;">10 Oct 21:15</div>
<div class="t" style="left:574.7px;top:475.2px;font-size:9.2px;line-height:12.2px;letter-spacing:0.22px;-webkit-text-stroke:0.12px #000;">10 Oct 21:55</div>
<div class="t" style="left:638.7px;top:475.2px;font-size:9.2px;line-height:12.2px;letter-spacing:0.22px;-webkit-text-stroke:0.12px #000;">10 Oct 22:35</div>
<div class="t" style="left:702.7px;top:475.2px;font-size:9.2px;line-height:12.2px;letter-spacing:0.22px;-webkit-text-stroke:0.12px #000;">10 Oct 23:15</div>
<div class="t" style="left:766.7px;top:475.2px;font-size:9.2px;line-height:12.2px;letter-spacing:0.22px;-webkit-text-stroke:0.12px #000;">10 Oct 23:55</div>
<div class="t" style="left:830.7px;top:475.2px;font-size:9.2px;line-height:12.2px;letter-spacing:0.31px;-webkit-text-stroke:0.12px #000;">11 Oct 00:35</div>
<div class="t" style="left:894.7px;top:475.2px;font-size:9.2px;line-height:12.2px;letter-spacing:0.31px;-webkit-text-stroke:0.12px #000;">11 Oct 01:15</div>
<div class="t" style="left:958.7px;top:475.2px;font-size:9.2px;line-height:12.2px;letter-spacing:0.31px;-webkit-text-stroke:0.12px #000;">11 Oct 01:55</div>
<div class="t" style="left:1022.7px;top:475.2px;font-size:9.2px;line-height:12.2px;letter-spacing:0.31px;-webkit-text-stroke:0.12px #000;">11 Oct 02:35</div>
<div class="t" style="left:1086.7px;top:475.2px;font-size:9.2px;line-height:12.2px;letter-spacing:0.31px;-webkit-text-stroke:0.12px #000;">11 Oct 03:15</div>
<div class="t" style="left:402.3px;top:145px;font-size:14.3px;line-height:17.3px;letter-spacing:0.31px;color:#2a2108;z-index:3;">Stochastic Oscillator</div>
<div class="t" style="left:628px;top:140.6px;font-size:14px;line-height:17px;letter-spacing:0px;font-weight:bold;color:#1c1608;z-index:3;">?</div>
<div class="t" style="left:264.3px;top:178px;font-size:12px;line-height:15px;letter-spacing:0px;z-index:3;transform:scaleX(0.918);transform-origin:0 0;">Параметры</div>
<div class="t" style="left:333.8px;top:180.3px;font-size:12px;line-height:15px;letter-spacing:0px;z-index:3;transform:scaleX(0.95);transform-origin:0 0;">Цвета</div>
<div class="t" style="left:377.3px;top:180.3px;font-size:12px;line-height:15px;letter-spacing:0px;z-index:3;transform:scaleX(0.968);transform-origin:0 0;">Уровни</div>
<div class="t" style="left:426.6px;top:180.3px;font-size:12px;line-height:15px;letter-spacing:0px;z-index:3;transform:scaleX(0.912);transform-origin:0 0;">Отображение</div>
<div class="t" style="left:351.7px;top:216.9px;font-size:12px;line-height:15px;letter-spacing:0px;z-index:3;transform:scaleX(0.883);transform-origin:0 0;">Период %K:</div>
<div class="t" style="left:350.8px;top:249.6px;font-size:12px;line-height:15px;letter-spacing:0px;z-index:3;transform:scaleX(0.883);transform-origin:0 0;">Период %D:</div>
<div class="t" style="left:539.1px;top:216.9px;font-size:12px;line-height:15px;letter-spacing:0px;z-index:3;transform:scaleX(0.93);transform-origin:0 0;">Замедление:</div>
<div class="t" style="left:543.5px;top:249.6px;font-size:12px;line-height:15px;letter-spacing:0px;z-index:3;transform:scaleX(0.944);transform-origin:0 0;">Цены:</div>
<div class="t" style="left:586.5px;top:250px;font-size:12px;line-height:15px;letter-spacing:0px;z-index:3;transform:scaleX(0.954);transform-origin:0 0;">Low/High</div>
<div class="t" style="left:423.9px;top:282.6px;font-size:12px;line-height:15px;letter-spacing:0px;z-index:3;transform:scaleX(0.903);transform-origin:0 0;">Метод МА:</div>
<div class="t" style="left:488.1px;top:282.2px;font-size:12px;line-height:15px;letter-spacing:0px;z-index:3;transform:scaleX(0.887);transform-origin:0 0;">Smoothed</div>
<div class="t" style="left:290.9px;top:314.8px;font-size:12px;line-height:15px;letter-spacing:0px;z-index:3;transform:scaleX(0.931);transform-origin:0 0;">Закрепить минимум</div>
<div class="t" style="left:484.5px;top:314.8px;font-size:12px;line-height:15px;letter-spacing:0px;z-index:3;transform:scaleX(0.96);transform-origin:0 0;">акрепить максимум</div>
<div class="t" style="left:421.8px;top:216.5px;font-size:12px;line-height:15px;letter-spacing:0px;color:#fff;z-index:3;transform:scaleX(0.833);transform-origin:0 0;">14</div>
<div class="t" style="left:420.7px;top:249.3px;font-size:12px;line-height:15px;letter-spacing:0px;z-index:3;transform:scaleX(0.9);transform-origin:0 0;">3</div>
<div class="t" style="left:615.2px;top:216.4px;font-size:12px;line-height:15px;letter-spacing:0px;z-index:3;transform:scaleX(0.9);transform-origin:0 0;">3</div>
<div class="t" style="left:421.6px;top:314.1px;font-size:12px;line-height:15px;letter-spacing:0px;z-index:3;transform:scaleX(0.9);transform-origin:0 0;">0</div>
<div class="t" style="left:615.9px;top:314.1px;font-size:12px;line-height:15px;letter-spacing:0px;z-index:3;transform:scaleX(0.905);transform-origin:0 0;">100</div>
<div class="t" style="left:476.3px;top:357.7px;font-size:12px;line-height:15px;letter-spacing:0px;z-index:3;transform:scaleX(0.925);transform-origin:0 0;">OK</div>
<div class="t" style="left:544.9px;top:357.7px;font-size:12px;line-height:15px;letter-spacing:0px;z-index:3;transform:scaleX(0.917);transform-origin:0 0;">Отмена</div>
<div class="t" style="left:629.4px;top:357.7px;font-size:12px;line-height:15px;letter-spacing:0px;z-index:3;transform:scaleX(0.929);transform-origin:0 0;">Сброс</div>
</body></html>
